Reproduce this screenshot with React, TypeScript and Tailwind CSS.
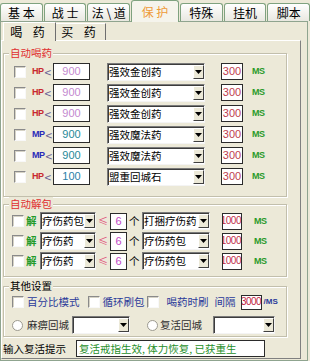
import type { ReactNode } from 'react';

const drinkRows = [
    { kind: 'HP', kindColor: 'text-[#c8282f]', value: '900', valueColor: 'text-[#c48ad0]', item: '强效金创药' },
    { kind: 'HP', kindColor: 'text-[#c8282f]', value: '900', valueColor: 'text-[#c48ad0]', item: '强效金创药' },
    { kind: 'HP', kindColor: 'text-[#c8282f]', value: '900', valueColor: 'text-[#c48ad0]', item: '强效金创药' },
    { kind: 'MP', kindColor: 'text-[#2a2ab8]', value: '900', valueColor: 'text-[#1f8a98]', item: '强效魔法药' },
    { kind: 'MP', kindColor: 'text-[#2a2ab8]', value: '900', valueColor: 'text-[#1f8a98]', item: '强效魔法药' },
    { kind: 'HP', kindColor: 'text-[#c8282f]', value: '100', valueColor: 'text-[#2a7fa8]', item: '盟重回城石' },
];

const unpackRows = [
    { from: '疗伤药包', to: '打捆疗伤药' },
    { from: '疗伤药', to: '疗伤药包' },
    { from: '疗伤药', to: '疗伤药包' },
];

const tabs = ['基 本', '战 士', '法 \\ 道', '保 护', '特殊', '挂机', '脚本'];

function Check() {
    return (
        <span className="block w-[12px] h-[12px] shrink-0 bg-white border border-t-[#8a8a8a] border-l-[#8a8a8a] border-b-[#f8f8f8] border-r-[#f8f8f8] shadow-[inset_1px_1px_0_#d6d3c6]" />
    );
}

function Radio() {
    return <span className="block w-[11px] h-[11px] shrink-0 rounded-full bg-white border border-[#9c9a90]" />;
}

function NumBox({ value, className }: { value: string; className: string }) {
    return (
        <span
            className={`flex items-center justify-center h-[17px] shrink-0 bg-white border border-[#2b2b2b] font-['Liberation_Sans',sans-serif] text-[11px] leading-none ${className}`}
        >
            {value}
        </span>
    );
}

function Select({ text, className }: { text: string; className: string }) {
    return (
        <div
            className={`flex items-center h-[18px] shrink-0 bg-white border border-t-[#7a7a7a] border-l-[#7a7a7a] border-b-[#f4f4f4] border-r-[#f4f4f4] shadow-[inset_1px_1px_0_#3c3c3c] ${className}`}
        >
            <span className="flex-1 pl-[1px] whitespace-nowrap overflow-hidden text-[10.5px] leading-[14px]">{text}</span>
            <span className="flex items-center justify-center w-[11px] h-[14px] shrink-0 bg-[#ece9d8] border border-t-white border-l-white border-b-[#404040] border-r-[#404040]">
                <svg width="7" height="4" viewBox="0 0 7 4">
                    <path d="M0 0h7L3.5 4z" fill="#000" />
                </svg>
            </span>
        </div>
    );
}

function MS({ className = '' }: { className?: string }) {
    return (
        <span className={`font-['Liberation_Sans',sans-serif] text-[9px] font-bold tracking-[-0.4px] text-[#2a9a2a] leading-none ${className}`}>
            MS
        </span>
    );
}

function Group({ title, red, className, children }: { title: string; red?: boolean; className: string; children: ReactNode }) {
    return (
        <fieldset
            className={`ml-[1px] w-[284px] border border-[#c2bfac] shadow-[inset_1px_1px_0_#fff,1px_1px_0_#fff] ${className}`}
        >
            <legend
                className={`ml-[5px] px-[1px] bg-[#ece9d8] text-[10.5px] leading-[14px] ${red ? 'text-[#e03030]' : 'text-black'}`}
            >
                {title}
            </legend>
            {children}
        </fieldset>
    );
}

export default function App() {
    return (
        <div className="w-[310px] h-[361px] overflow-hidden bg-[#ece9d8] text-black font-['Noto_Sans_CJK_SC','Noto_Sans',sans-serif]">
            {/* top tabs */}
            <div className="flex items-end h-[21px]">
                {tabs.map((t, i) =>
                    i === 3 ? (
                        <div
                            key={t}
                            className="relative z-10 -mb-px flex items-center justify-center w-[48px] h-[22px] ml-px rounded-t-[3px] border border-b-0 border-[#7fa27f] bg-[#f5f4ec] text-[12px] text-[#ee9a38]"
                        >
                            {t}
                        </div>
                    ) : (
                        <div
                            key={t}
                            className={`flex items-center justify-center w-[43px] h-[18px] rounded-t-[3px] border border-b-0 border-[#7fa27f] bg-linear-to-b from-white to-[#e9e8e0] text-[12px] ${i === 0 ? '' : 'ml-px'}`}
                        >
                            {t}
                        </div>
                    )
                )}
            </div>

            {/* outer page */}
            <div className="w-[308px] h-[340px] border border-[#8fa48f]">
                {/* inner tabs */}
                <div className="flex items-end h-[18px]">
                    <div className="relative z-10 -mb-px flex items-center justify-center ml-[2px] w-[53px] h-[19px] bg-[#ece9d8] border-l border-t border-r border-l-white border-t-white border-r-[#6e6e6e] text-[12px] tracking-[4px]">
                        喝 药
                    </div>
                    <div className="flex items-center justify-center w-[50px] h-[17px] border-t border-r border-t-white border-r-[#6e6e6e] text-[12px] tracking-[4px]">
                        买 药
                    </div>
                </div>

                {/* inner page */}
                <div className="flex flex-col w-[300px] h-[319px] border border-t-white border-l-white border-r-[#808080] border-b-[#808080]">
                    <Group title="自动喝药" red className="mt-[5px] pt-[1px] pb-[9px]">
                        {drinkRows.map((r, i) => (
                            <div key={i} className="flex items-center h-[21px] pl-[10px]">
                                <Check />
                                <span className="flex items-center ml-[6px] w-[20px]">
                                    <span className={`font-['Liberation_Sans',sans-serif] text-[9px] font-bold tracking-[-0.5px] leading-none ${r.kindColor}`}>
                                        {r.kind}
                                    </span>
                                    <span className="ml-[1px] text-[12px] leading-[14px] text-[#6a5f95]">&lt;</span>
                                </span>
                                <NumBox value={r.value} className={`ml-[1px] w-[37px] ${r.valueColor}`} />
                                <Select text={r.item} className="ml-[17px] w-[98px]" />
                                <NumBox value="300" className="ml-[16px] w-[22px] text-[#c0404f]" />
                                <MS className="ml-[9px]" />
                            </div>
                        ))}
                    </Group>

                    <Group title="自动解包" red className="pb-[5px]">
                        {unpackRows.map((r, i) => (
                            <div key={i} className="flex items-center h-[20px] pl-[8px]">
                                <Check />
                                <span className="ml-[2px] w-[12px] text-[10.5px] font-bold leading-[14px] text-[#1f9a2a]">解</span>
                                <Select text={r.from} className="ml-[2px] w-[56px]" />
                                <span className="ml-[2px] w-[8px] text-[10px] leading-[14px] text-[#e0507a]">≤</span>
                                <NumBox value="6" className={`ml-[4px] w-[17px] text-[#c24ac6] ${i === 1 ? 'h-[19px]' : ''}`} />
                                <span className="ml-[2px] w-[12px] text-[10.5px] leading-[14px]">个</span>
                                <Select text={r.to} className="ml-[1px] w-[68px]" />
                                <span className="flex items-center justify-end overflow-hidden ml-[12px] w-[20px] h-[17px] bg-white border border-[#2b2b2b] font-['Liberation_Sans',sans-serif] text-[10px] tracking-[-0.5px] leading-[14px] text-[#c0304a]">
                                    1000
                                </span>
                                <MS className="ml-[12px]" />
                            </div>
                        ))}
                    </Group>

                    <Group title="其他设置" className="mt-[2px] pb-[1px]">
                        <div className="flex items-center h-[18px] pl-[8px] text-[10.5px] leading-[14px] text-[#2a3a9a]">
                            <Check />
                            <span className="ml-[3px]">百分比模式</span>
                            <span className="ml-[8px]"><Check /></span>
                            <span className="ml-[3px]">循环刷包</span>
                            <span className="ml-[2px]"><Check /></span>
                            <span className="ml-[8px]">喝药时刷</span>
                            <span className="ml-[6px]">间隔</span>
                            <span className="flex items-center justify-center overflow-hidden ml-[5px] w-[21px] h-[15px] bg-white border border-[#2b2b2b] font-['Liberation_Sans',sans-serif] text-[10px] tracking-[-0.5px] text-[#c0203e]">
                                3000
                            </span>
                            <span className="ml-[2px] font-['Liberation_Sans',sans-serif] text-[8px] font-bold text-[#2a3a9a]">/MS</span>
                        </div>
                        <div className="flex items-center h-[20px] mt-[4px] pl-[8px] text-[10.5px] leading-[14px] text-[#303030]">
                            <Radio />
                            <span className="ml-[4px]">麻痹回城</span>
                            <Select text="" className="ml-[3px] w-[58px]" />
                            <span className="ml-[17px]"><Radio /></span>
                            <span className="ml-[2px]">复活回城</span>
                            <Select text="" className="ml-[11px] w-[62px]" />
                        </div>
                    </Group>

                    <div className="flex items-center h-[19px] mt-[2px] text-[10.5px] leading-[14px]">
                        <span className="ml-[1px]">输入复活提示</span>
                        <span className="flex items-center ml-[10px] w-[189px] h-[17px] pl-[2px] bg-white border border-[#2b2b2b] text-[#1f8f2a] whitespace-nowrap">
                            复活戒指生效, 体力恢复, 已获重生
                        </span>
                    </div>
                </div>
            </div>
        </div>
    );
}
